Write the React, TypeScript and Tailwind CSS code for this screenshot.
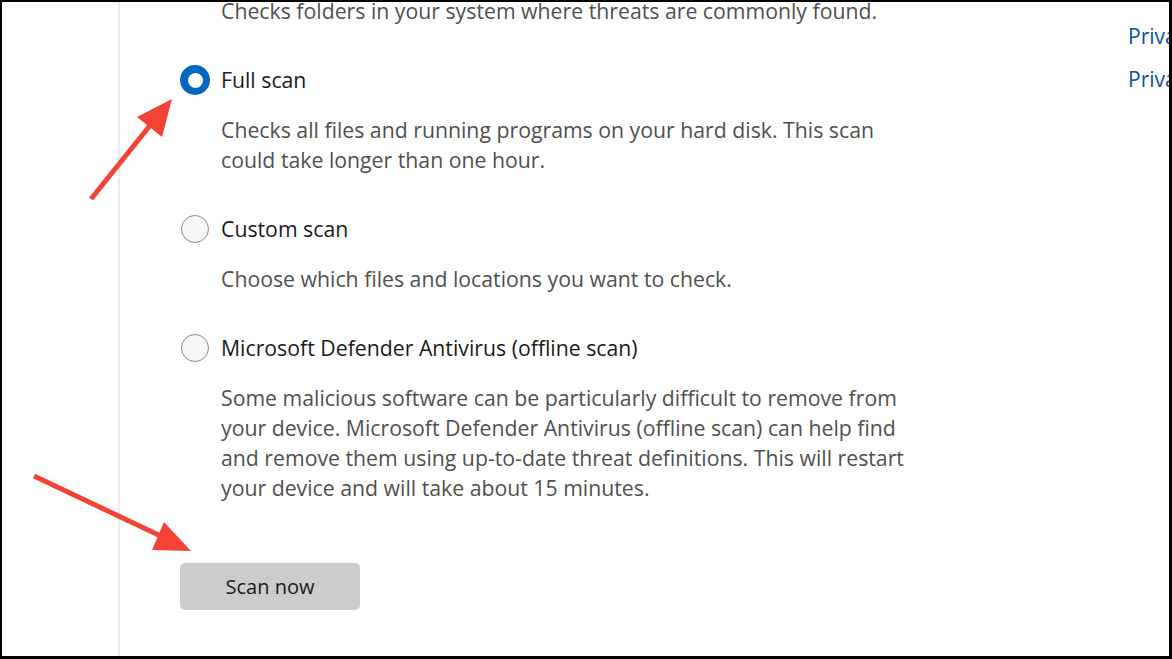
import React from "react";

const font = { fontFamily: '"Open Sans", "Noto Sans", sans-serif' };

function Radio({ checked }: { checked?: boolean }) {
  if (checked) {
    return (
      <div className="w-[30px] h-[30px] rounded-full bg-[#0067c0] flex items-center justify-center shrink-0">
        <div className="w-[15px] h-[15px] rounded-full bg-white" />
      </div>
    );
  }
  return (
    <div className="w-[28px] h-[28px] mx-[1px] rounded-full border-[1.5px] border-[#8a8a8a] bg-[#f7f7f7] shrink-0" />
  );
}

function Option({ label, checked, desc }: { label: string; checked?: boolean; desc: string[] }) {
  return (
    <div className="flex flex-col">
      <div className="mt-[39px] flex items-center h-[30px]">
        <Radio checked={checked} />
        <span className="ml-[11px] text-[21.25px] leading-[30px] text-[#1a1a1a] whitespace-nowrap">{label}</span>
      </div>
      <div className="mt-[20px] pl-[41px] text-[21.25px] leading-[30px] text-[#505050] whitespace-nowrap">
        {desc.map((d, i) => (
          <div key={i}>{d}</div>
        ))}
      </div>
    </div>
  );
}

export default function App() {
  return (
    <div
      className="relative w-[1172px] h-[659px] overflow-hidden bg-white border-l-2 border-t-2 border-r-[3px] border-b-[3px] border-black"
      style={font}
    >
      <div className="flex h-full">
        <div className="w-[116px] shrink-0" />
        <div className="w-[2px] shrink-0 bg-[#ececec]" />
        <div className="w-[1008px] shrink-0 pl-[60px] flex flex-col">
          <div className="mt-[-6px] pl-[41px] text-[21.25px] leading-[30px] text-[#505050] whitespace-nowrap">
            Checks folders in your system where threats are commonly found.
          </div>
          <Option
            label="Full scan"
            checked
            desc={[
              "Checks all files and running programs on your hard disk. This scan",
              "could take longer than one hour.",
            ]}
          />
          <Option label="Custom scan" desc={["Choose which files and locations you want to check."]} />
          <Option
            label="Microsoft Defender Antivirus (offline scan)"
            desc={[
              "Some malicious software can be particularly difficult to remove from",
              "your device. Microsoft Defender Antivirus (offline scan) can help find",
              "and remove them using up-to-date threat definitions. This will restart",
              "your device and will take about 15 minutes.",
            ]}
          />
          <button className="mt-[60px] w-[180px] h-[47px] rounded-[5px] bg-[#cccccc] text-[20px] text-[#1a1a1a] flex items-center justify-center">
            Scan now
          </button>
        </div>
        <div className="flex-1 overflow-hidden whitespace-nowrap text-[21px] leading-[30px] text-[#10509e] pt-[19px]">
          <div>Privacy</div>
          <div className="mt-[13px]">Privacy</div>
        </div>
      </div>
      <svg className="absolute left-[-2px] top-[-2px] pointer-events-none" width="1172" height="659">
        <line x1="91" y1="199" x2="152" y2="123" stroke="#f44336" strokeWidth="5" />
        <polygon points="172,99 137,117 162,137" fill="#f44336" />
        <line x1="34" y1="476" x2="165" y2="538" stroke="#f44336" strokeWidth="5" />
        <polygon points="191,551 152,550 164,522" fill="#f44336" />
      </svg>
    </div>
  );
}
